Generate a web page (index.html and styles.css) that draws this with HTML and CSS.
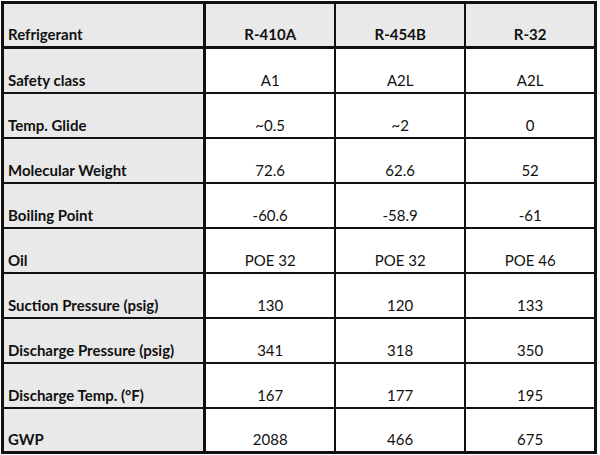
FILE: index.html
```html
<!DOCTYPE html>
<html>
<head>
<meta charset="utf-8">
<link rel="stylesheet" href="styles.css">
</head>
<body>
<table class="grid">
  <colgroup>
    <col class="c-label">
    <col class="c-val">
    <col class="c-val">
    <col class="c-val">
  </colgroup>
  <thead>
    <tr class="head">
      <th class="label">Refrigerant</th>
      <th>R-410A</th>
      <th>R-454B</th>
      <th>R-32</th>
    </tr>
  </thead>
  <tbody>
    <tr><th class="label">Safety class</th><td>A1</td><td>A2L</td><td>A2L</td></tr>
    <tr><th class="label">Temp. Glide</th><td>~0.5</td><td>~2</td><td>0</td></tr>
    <tr><th class="label">Molecular Weight</th><td>72.6</td><td>62.6</td><td>52</td></tr>
    <tr><th class="label">Boiling Point</th><td>-60.6</td><td>-58.9</td><td>-61</td></tr>
    <tr><th class="label">Oil</th><td>POE 32</td><td>POE 32</td><td>POE 46</td></tr>
    <tr><th class="label">Suction Pressure (psig)</th><td>130</td><td>120</td><td>133</td></tr>
    <tr><th class="label">Discharge Pressure (psig)</th><td>341</td><td>318</td><td>350</td></tr>
    <tr><th class="label">Discharge Temp. (°F)</th><td>167</td><td>177</td><td>195</td></tr>
    <tr><th class="label">GWP</th><td>2088</td><td>466</td><td>675</td></tr>
  </tbody>
</table>
</body>
</html>
```

FILE: styles.css
```css
html, body {
  margin: 0;
  padding: 0;
  background: #ffffff;
}
body {
  padding: 1px 0 0 1px;
  font-family: Lato, "Liberation Sans", sans-serif;
  font-size: 15px;
  color: #111111;
}
.grid {
  border-collapse: collapse;
  width: 596px;
  table-layout: fixed;
  border: 3px solid #111111;
}
.c-label { width: 202px; }
.c-val { width: 130px; }
.grid tr {
  height: 45px;
}
.grid th,
.grid td {
  padding: 0 4px 4px 4px;
  vertical-align: bottom;
  border: 2px solid #111111;
  line-height: 16px;
  text-align: center;
  font-weight: 400;
  background: #ffffff;
}
.grid th.label {
  text-align: left;
  font-weight: 700;
  background: #e9e9e9;
  border-right-width: 3px;
  padding-left: 4px;
}
.grid .head th {
  background: #e9e9e9;
  font-weight: 700;
  border-bottom-width: 3px;
}
```
